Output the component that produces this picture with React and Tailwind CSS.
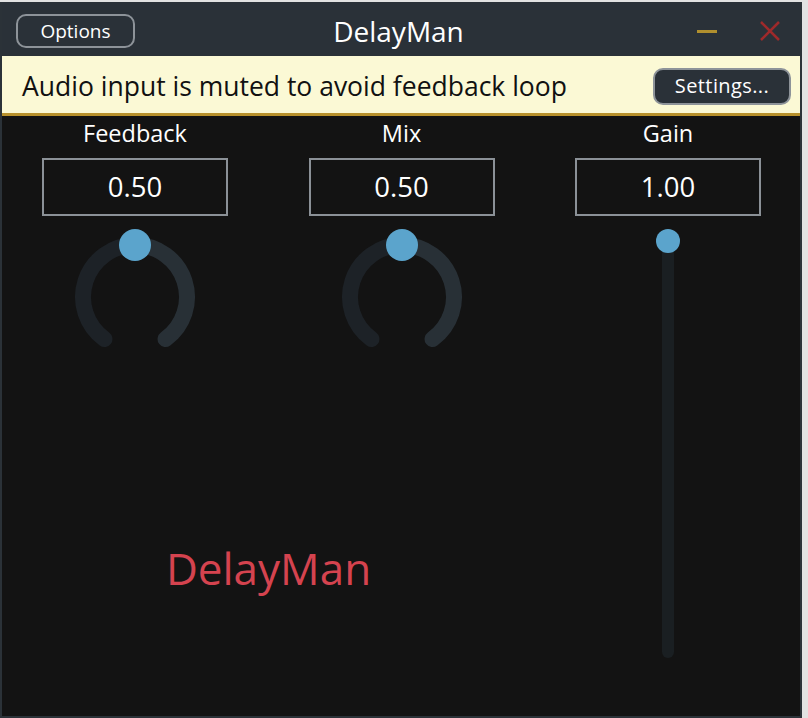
// DelayMan plugin window — title bar, warning banner, knobs + gain slider

const FONT = { fontFamily: '"Open Sans", "Liberation Sans", sans-serif' }

function Knob({ label, value }) {
  // rotary arc spans -144°..+144° from top, value 0.5 puts thumb at top
  return (
    <div className="w-[266px] flex flex-col items-center">
      <div className="h-[36px] flex items-center text-[23.5px] leading-none text-white">{label}</div>
      <div className="mt-[6px] w-[186px] h-[58px] border-2 border-[#8b9197] flex items-center justify-center text-[27.5px] leading-none text-white">
        {value}
      </div>
      <svg width="266" height="145" viewBox="0 0 266 145">
        <path d="M 102.44 123.07 A 52 52 0 0 1 133 29" fill="none" stroke="#1d2227" strokeWidth="16" strokeLinecap="round" />
        <path d="M 133 29 A 52 52 0 0 1 163.56 123.07" fill="none" stroke="#283036" strokeWidth="16" strokeLinecap="round" />
        <circle cx="133" cy="29" r="16" fill="#5ba4cc" />
      </svg>
    </div>
  )
}

function GainSlider() {
  return (
    <div className="w-[266px] flex flex-col items-center">
      <div className="h-[36px] flex items-center text-[23.5px] leading-none text-white">Gain</div>
      <div className="mt-[6px] w-[186px] h-[58px] border-2 border-[#8b9197] flex items-center justify-center text-[27.5px] leading-none text-white">
        1.00
      </div>
      <svg width="266" height="450" viewBox="0 0 266 450">
        <line x1="133" y1="25" x2="133" y2="436" stroke="#1a1f22" strokeWidth="12" strokeLinecap="round" />
        <circle cx="133" cy="25" r="12" fill="#5ba4cc" />
      </svg>
    </div>
  )
}

export default function App() {
  return (
    <div className="w-[808px] h-[718px] bg-[#e2e2e2] pt-[2px] flex overflow-hidden" style={FONT}>
      <div className="w-[802px] h-[716px] flex flex-col border-x-2 border-b-2 border-[#2b3238] bg-[#131313]">
        {/* Title bar */}
        <div className="h-[54px] bg-[#2a3138] grid grid-cols-[1fr_auto_1fr] items-center pl-[14px] pr-[19px] pt-[4px]">
          <button className="w-[119px] h-[34px] rounded-[10px] border-2 border-[#8d9399] text-white text-[19px] leading-none flex items-center justify-center">
            Options
          </button>
          <div className="text-white text-[28px] leading-none">DelayMan</div>
          <div className="flex items-center justify-end">
            <div className="w-[20px] h-[3px] bg-[#b08f2e] mr-[42px]" />
            <svg width="22" height="22" viewBox="0 0 22 22">
              <path d="M2 2 L20 20 M20 2 L2 20" stroke="#9e2a2b" strokeWidth="2.5" />
            </svg>
          </div>
        </div>

        {/* Muted warning */}
        <div className="h-[60px] bg-[#fbf9d5] flex items-center pl-[20px] pr-[9px] pt-[3px] border-b-[3px] border-[#b8912c]">
          <span className="flex-1 text-[26.5px] leading-none text-[#111]">Audio input is muted to avoid feedback loop</span>
          <button className="w-[138px] h-[37px] rounded-[10px] bg-[#2a3138] border-2 border-[#8d9399] text-white text-[20px] leading-none tracking-[0.02em]">
            Settings...
          </button>
        </div>

        {/* Controls */}
        <div className="flex flex-1">
          <div className="flex flex-col w-[533px]">
            <div className="flex">
              <Knob label="Feedback" value="0.50" />
              <div className="w-[267px] flex justify-center">
                <Knob label="Mix" value="0.50" />
              </div>
            </div>
            <div className="mt-[182px] h-[50px] flex items-center justify-center text-[44px] leading-none text-[#d5434f]">
              DelayMan
            </div>
          </div>
          <GainSlider />
        </div>
      </div>
    </div>
  )
}
